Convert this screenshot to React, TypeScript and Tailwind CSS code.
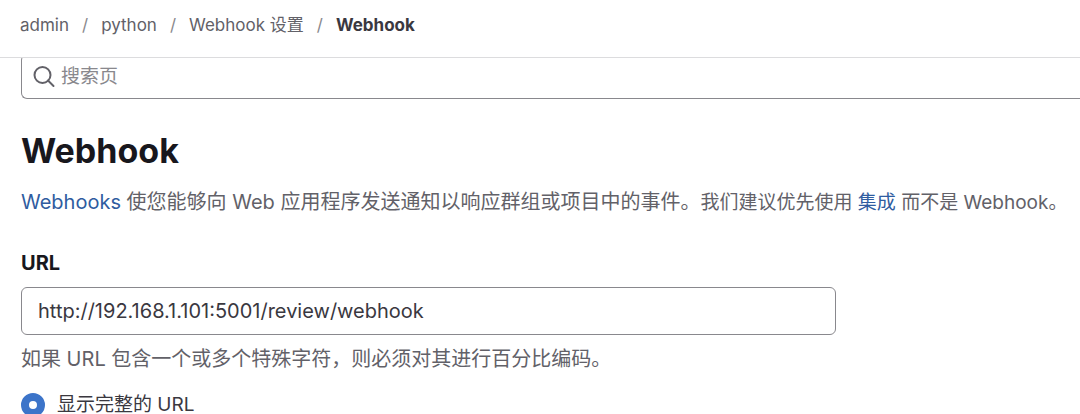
const crumbs = ['admin', 'python', 'Webhook 设置']

function SearchIcon() {
    return (
        <svg className="shrink-0" width="22" height="22" viewBox="0 0 22 22" fill="none" stroke="#626168" strokeWidth="2" aria-hidden="true">
            <circle cx="9.5" cy="9" r="8" />
            <path d="M15 14.5 20.5 20" strokeLinecap="round" />
        </svg>
    )
}

function Breadcrumbs() {
    return (
        <nav className="relative z-10 h-[58px] border-b border-[#dcdcde] bg-white px-5 pt-[13px]">
            <ol className="flex items-center text-[17px] leading-6 text-[#626168]">
                {crumbs.map((crumb) => (
                    <li key={crumb} className="flex items-center">
                        <a href="#">{crumb}</a>
                        <span className="px-[13px] text-[#89888d]">/</span>
                    </li>
                ))}
                <li className="font-bold text-[#3a383f]">Webhook</li>
            </ol>
        </nav>
    )
}

export default function App() {
    return (
        <div className="h-screen overflow-hidden bg-white font-['Inter','Noto_Sans_CJK_SC',sans-serif] text-[#3a383f]">
            <Breadcrumbs />
            <main className="pl-[21px]">
                <label className="-mt-1 flex h-[45px] items-center gap-1.5 rounded-l-md border border-r-0 border-[#89888d] pl-[11px]">
                    <SearchIcon />
                    <input
                        type="search"
                        aria-label="搜索页"
                        placeholder="搜索页"
                        className="w-full bg-transparent text-[19px] leading-6 outline-none placeholder:text-[#89888d]"
                    />
                </label>

                <h1 className="mt-8 text-[34px] leading-10 font-bold text-[#18171d]">Webhook</h1>
                <p className="mt-[15px] text-[20px] leading-8 whitespace-nowrap text-[#626168]">
                    <a href="#" className="text-[#2f5ca0]">Webhooks</a> 使您能够向 Web 应用程序发送通知以响应群组或项目中的事件。
                    <span className="text-[19px]">
                        我们建议优先使用 <a href="#" className="text-[#2f5ca0]">集成</a> 而不是 Webhook。
                    </span>
                </p>

                <form className="mt-7">
                    <label htmlFor="url" className="block text-[20px] leading-8 font-bold text-[#18171d]">URL</label>
                    <input
                        id="url"
                        type="text"
                        defaultValue="http://192.168.1.101:5001/review/webhook"
                        className="mt-2 block h-12 w-[77%] rounded-md border border-[#89888d] px-4 text-[20px] outline-none"
                    />
                    <p className="mt-2 text-[20px] leading-8 text-[#626168]">如果 URL 包含一个或多个特殊字符，则必须对其进行百分比编码。</p>
                    <label className="mt-4 flex items-center gap-3 text-[19px] leading-7">
                        <input
                            type="radio"
                            name="mask"
                            defaultChecked
                            className="size-6 appearance-none rounded-full border-8 border-[#3c74c9] bg-white"
                        />
                        显示完整的 URL
                    </label>
                </form>
            </main>
        </div>
    )
}
